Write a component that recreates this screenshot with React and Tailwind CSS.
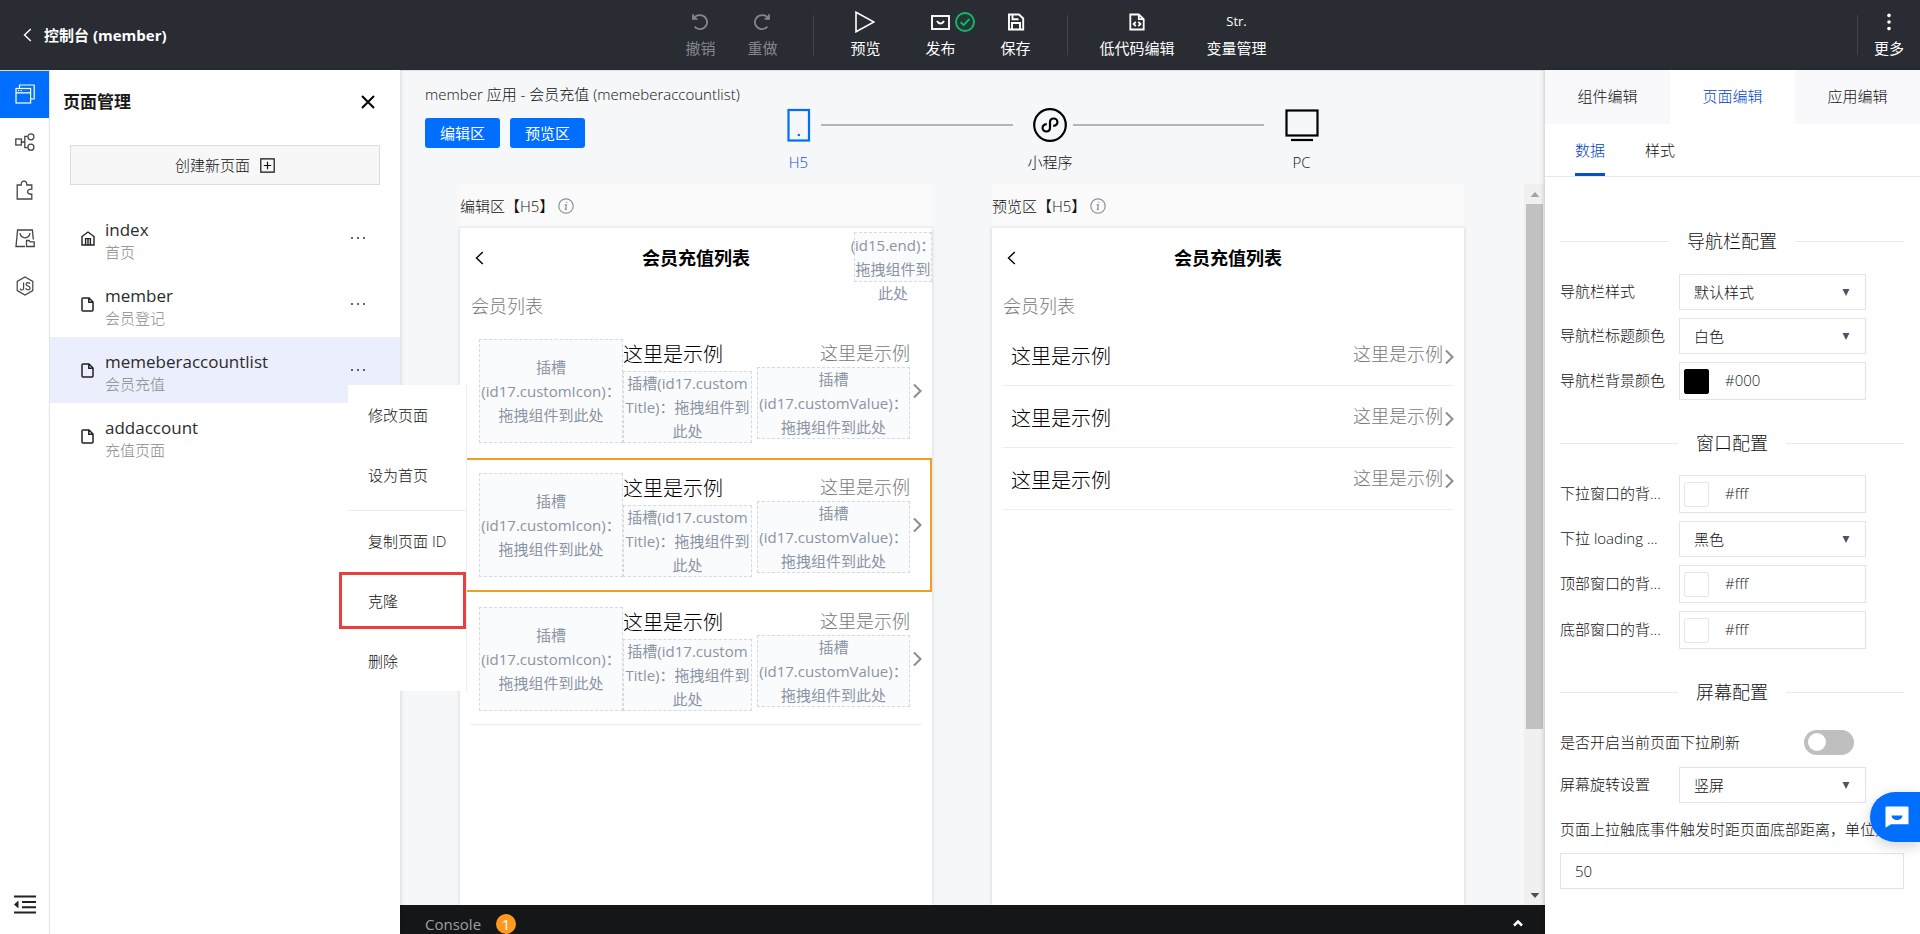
import React, { useState } from 'react';

const stroke = { fill: 'none', stroke: 'currentColor' };

/* ---------- icons ---------- */
const ChevronLeft = ({ className }) => (
  <svg viewBox="0 0 9 14" className={className} {...stroke} strokeWidth="1.4"><path d="M7.8 1 1.5 7l6.3 6" /></svg>
);
const ChevronRight = ({ className }) => (
  <svg viewBox="0 0 9 16" className={className} {...stroke} strokeWidth="2"><path d="M1 1.5 7.5 8 1 14.5" /></svg>
);
const UndoIcon = () => (
  <svg viewBox="0 0 18 18" className="size-[18px]" {...stroke} strokeWidth="1.8">
    <path d="M2 1.200v4.600h4.400M2.600 5.400A7 7 0 0 1 9 2.200a7 7 0 1 1-5.400 11.400" />
  </svg>
);
const RedoIcon = () => (
  <svg viewBox="0 0 18 18" className="size-[18px]" {...stroke} strokeWidth="1.8">
    <path d="M16 1.200v4.600h-4.400M15.400 5.400A7 7 0 0 0 9 2.200a7 7 0 1 0 5.400 11.400" />
  </svg>
);
const PlayIcon = () => (
  <svg viewBox="0 0 20 22" className="h-[22px] w-5" {...stroke} strokeWidth="1.6"><path d="M1 1.200v19.600L19 11z" /></svg>
);
const PublishIcon = () => (
  <svg viewBox="0 0 19 15" className="h-[15px] w-[19px]" {...stroke} strokeWidth="1.9">
    <rect x="1" y="1" width="17" height="13" />
    <path d="M6 6c1 1.800 2 2.500 3.500 2.500S12 7.800 13 6" />
  </svg>
);
const CheckCircle = () => (
  <svg viewBox="0 0 20 20" className="size-5" fill="none" stroke="#16b868" strokeWidth="1.9">
    <circle cx="10" cy="10" r="9" fill="#1f3a35" />
    <path d="m5.600 10.200 3 3L14.400 7" />
  </svg>
);
const SaveIcon = () => (
  <svg viewBox="0 0 18 18" className="size-[18px]" {...stroke} strokeWidth="1.900">
    <path d="M2 1.500h10l4.200 4V16.500H2zM5.500 1.800v4.400h6M5 16.300V10h8v6.300" />
  </svg>
);
const CodeFileIcon = () => (
  <svg viewBox="0 0 16 18" className="h-[18px] w-4" {...stroke} strokeWidth="1.800">
    <path d="M1.300 1.500h8.500l4.900 4.700v10.300H1.300zM9.800 1.500v4.700h5M6.800 8.800 4.600 11l2.200 2.200M9.300 8.800l2.200 2.200-2.200 2.200" />
  </svg>
);
const MoreIcon = () => (
  <svg viewBox="0 0 4 18" className="h-[18px] w-1" fill="currentColor">
    <circle cx="2" cy="2.400" r="1.800" /><circle cx="2" cy="9" r="1.800" /><circle cx="2" cy="15.600" r="1.800" />
  </svg>
);
const PagesIcon = () => (
  <svg viewBox="0 0 20 20" className="size-5" {...stroke} strokeWidth="1.200">
    <path d="M4.500 4V1h14.700v14h-3.500" />
    <rect x="1" y="4.500" width="14.600" height="14.500" />
    <path d="M1 8.800h14.600M3 6.700h1.200M5.600 6.700h1.200" />
  </svg>
);
const FlowIcon = () => (
  <svg viewBox="0 0 20 18" className="h-[18px] w-5" {...stroke} strokeWidth="1.300">
    <rect x=".8" y="6" width="5.600" height="6" />
    <path d="M6.400 9h3.400M12.600 3.400H9.800v11.200h2.800" />
    <circle cx="15.900" cy="3.800" r="3" /><circle cx="15.900" cy="14.200" r="3" />
  </svg>
);
const PuzzleIcon = () => (
  <svg viewBox="0 0 18 20" className="h-5 w-[18px]" {...stroke} strokeWidth="1.300">
    <path d="M1.200 5h4C5 2.400 6.200 1.200 8 1.200S11 2.400 10.800 5h5v4.200c-2.600-.2-4.200.8-4.200 2.500s1.600 2.700 4.200 2.500V19H1.200z" />
  </svg>
);
const BagIcon = () => (
  <svg viewBox="0 0 20 19" className="h-[19px] w-5" {...stroke} strokeWidth="1.300">
    <path d="M10 17.500H1L2.600 1h14.800l.9 9.500M5 4.200c.5 3 2.400 4.600 5 4.600s4.500-1.600 5-4.600" />
    <path d="M11.500 17.500v-6h2.600l1.200 1.400h3.900v4.600z" />
  </svg>
);
const NodeIcon = () => (
  <svg viewBox="0 0 18 20" className="h-5 w-[18px]" {...stroke} strokeWidth="1.200">
    <path d="M9 1l7.800 4.400v9.200L9 19l-7.800-4.400V5.400z" />
    <path d="M7.600 6.500v5.800c0 1.300-.8 1.700-1.600 1.700s-1.700-.5-1.700-1.600M13.900 8c-.2-1-1-1.400-1.900-1.400-1.100 0-1.900.6-1.900 1.600 0 2.300 4 1.400 4 3.800 0 1.100-.9 1.800-2.100 1.800s-2.100-.6-2.200-1.800" />
  </svg>
);
const CollapseIcon = () => (
  <svg viewBox="0 0 22 19" className="h-[19px] w-[22px] text-[#222]" fill="currentColor">
    <path d="M0 .5h22v2H0zM8 6h14v2H8zM8 11.300h14v2H8zM0 16.500h22v2H0zM4.500 5.500v8L0 9.500z" />
  </svg>
);
const HomeIcon = () => (
  <svg viewBox="0 0 14 15" className="h-[15px] w-3.5" {...stroke} strokeWidth="1.400">
    <path d="M1 5.500 7 1l6 4.500V14H1zM4.600 14V7.600h4.800V14M7 8v6" />
  </svg>
);
const FileIcon = () => (
  <svg viewBox="0 0 13 15" className="h-[15px] w-[13px]" {...stroke} strokeWidth="1.500">
    <path d="M2 1h6l4 4v8a1 1 0 0 1-1 1H2a1 1 0 0 1-1-1V2a1 1 0 0 1 1-1zM7.800 1v4.200H12" />
  </svg>
);
const Dots = () => (
  <svg viewBox="0 0 16 4" className="h-1 w-4" fill="currentColor">
    <circle cx="2" cy="2" r="1" /><circle cx="8" cy="2" r="1" /><circle cx="14" cy="2" r="1" />
  </svg>
);
const CloseIcon = () => (
  <svg viewBox="0 0 14 14" className="size-3.5" {...stroke} strokeWidth="2"><path d="m1 1 12 12M13 1 1 13" /></svg>
);
const PlusBox = () => (
  <svg viewBox="0 0 15 15" className="size-[15px]" {...stroke} strokeWidth="1.200">
    <path d="M.8.8h13.400v13.400H.8zM7.500 3.800v7.400M3.800 7.500h7.400" />
  </svg>
);
const InfoIcon = () => (
  <svg viewBox="0 0 16 16" className="size-4 text-[#8a939c]" {...stroke} strokeWidth="1.200">
    <circle cx="8" cy="8" r="7.200" />
    <path d="M6.600 6.800h1.800l-1 4.600h1.500" /><circle cx="8.800" cy="4.400" r=".6" fill="currentColor" stroke="none" />
  </svg>
);
const PhoneIcon = () => (
  <svg viewBox="0 0 24 34" className="h-[34px] w-6" {...stroke} strokeWidth="2.200">
    <rect x="1.500" y="2" width="20.500" height="30.500" /><path d="M10.700 27h2.200" />
  </svg>
);
const MiniIcon = () => (
  <svg viewBox="0 0 34 34" className="size-[34px]" {...stroke} strokeWidth="2.200">
    <circle cx="17" cy="17" r="15.800" />
    <path d="M13.800 16.200c-2.600.2-4.200 1.700-4.200 3.800 0 2 1.600 3.500 3.700 3.500s3.700-1.500 3.700-3.700v-5.600c0-2.200 1.600-3.700 3.700-3.700s3.700 1.500 3.700 3.500c0 2.100-1.600 3.600-4.200 3.800" />
  </svg>
);
const MonitorIcon = () => (
  <svg viewBox="0 0 34 34" className="size-[34px]" {...stroke} strokeWidth="2.200">
    <rect x="1.500" y="2.500" width="31" height="25" /><path d="M6 32h22" />
  </svg>
);
const Caret = ({ className }) => (
  <svg viewBox="0 0 8 7" preserveAspectRatio="none" className={className} fill="currentColor"><path d="M.5 0h7L4 7z" /></svg>
);
const ChatIcon = () => (
  <svg viewBox="0 0 24 22" className="h-[22px] w-6">
    <path d="M.5 1.500a1 1 0 0 1 1-1h21a1 1 0 0 1 1 1v16.700H6L.5 21.700z" fill="#fff" />
    <path d="M6.500 9.500h11a5.500 4.500 0 0 1-11 0z" fill="#006eff" />
  </svg>
);

/* ---------- header ---------- */
function Tool({ icon, label, dim }) {
  return (
    <button className={`flex flex-col items-center gap-0.5 font-normal ${dim ? 'text-[#85878c]' : 'text-white'}`}>
      <span className="flex h-6 items-center">{icon}</span>
      <span className="text-[15px] leading-6 whitespace-nowrap">{label}</span>
    </button>
  );
}
const Divider = () => <span className="h-10 w-px bg-[#414449]" />;

function Header() {
  return (
    <header className="relative z-10 grid h-[70px] shrink-0 grid-cols-[1fr_auto_1fr] items-center bg-[#292c33] shadow-[0_1px_0_#dcdee6]">
      <a href="#console" className="flex items-center gap-3 pl-[23px] text-[15px] font-bold text-white">
        <ChevronLeft className="h-3.5 w-[9px]" />
        控制台 (member)
      </a>
      <nav className="flex items-center gap-9 pl-8">
        <div className="flex gap-8">
          <Tool icon={<UndoIcon />} label="撤销" dim />
          <Tool icon={<RedoIcon />} label="重做" dim />
        </div>
        <Divider />
        <div className="flex gap-[45px]">
          <Tool icon={<PlayIcon />} label="预览" />
          <div className="relative">
            <Tool icon={<PublishIcon />} label="发布" />
            <span className="absolute top-0.5 left-[30px]"><CheckCircle /></span>
          </div>
          <Tool icon={<SaveIcon />} label="保存" />
        </div>
        <div className="flex items-center gap-8">
          <Divider />
          <Tool icon={<CodeFileIcon />} label="低代码编辑" />
          <Tool icon={<span className="text-[13px] font-medium">Str.</span>} label="变量管理" />
        </div>
      </nav>
      <div className="flex items-center justify-end gap-4 pr-4">
        <Divider />
        <Tool icon={<MoreIcon />} label="更多" />
      </div>
    </header>
  );
}

/* ---------- left side ---------- */
const railItems = [
  { label: '页面管理', icon: <PagesIcon />, active: true },
  { label: '流程', icon: <FlowIcon /> },
  { label: '组件', icon: <PuzzleIcon /> },
  { label: '素材', icon: <BagIcon /> },
  { label: '脚本', icon: <NodeIcon /> },
];

function Rail() {
  return (
    <nav className="flex w-[50px] shrink-0 flex-col border-r border-[#ececef] bg-white">
      {railItems.map((it) => (
        <button
          key={it.label}
          aria-label={it.label}
          className={`flex h-12 items-center justify-center ${it.active ? 'bg-[#006eff] text-white' : 'text-[#444]'}`}
        >
          {it.icon}
        </button>
      ))}
      <button aria-label="收起" className="mt-auto mb-5 flex justify-center"><CollapseIcon /></button>
    </nav>
  );
}

const pages = [
  { name: 'index', title: '首页', home: true },
  { name: 'member', title: '会员登记' },
  { name: 'memeberaccountlist', title: '会员充值', active: true },
  { name: 'addaccount', title: '充值页面' },
];

const menuItem = 'block h-[60px] w-full pl-5 text-left text-[15px] text-[#111]';

function PageMenu() {
  return (
    <div className="absolute top-12 left-[298px] z-30 w-[119px] border-r border-[#ededf0] bg-white">
      <button className={menuItem}>修改页面</button>
      <button className={menuItem}>设为首页</button>
      <hr className="mt-[5px] border-[#ececf0]" />
      <button className={menuItem}>复制页面 ID</button>
      <div className="relative">
        <button className={menuItem}>克隆</button>
        <span className="pointer-events-none absolute top-px right-0 h-[57px] w-[127px] border-3 border-[#e84040]" />
      </div>
      <button className={menuItem}>删除</button>
    </div>
  );
}

function PagesPanel() {
  return (
    <aside className="relative z-20 flex w-[350px] shrink-0 flex-col bg-white shadow-[1px_0_4px_rgba(0,0,0,0.12)]">
      <div className="flex h-16 items-center justify-between pr-[25px] pl-[13px]">
        <h2 className="text-[17px] font-bold text-[#1a1a1a]">页面管理</h2>
        <button aria-label="关闭"><CloseIcon /></button>
      </div>
      <button className="mx-5 mt-[11px] flex h-10 items-center justify-center gap-2.5 border border-[#dcdcdf] bg-[#f7f7f8] text-[15px] text-[#111]">
        创建新页面 <PlusBox />
      </button>
      <ul className="mt-5">
        {pages.map((p) => (
          <li
            key={p.name}
            className={`relative flex h-[66px] items-center pr-[34px] pl-[31px] ${p.active ? 'bg-[#ebeefc]' : ''}`}
          >
            <span className="flex w-6 text-[#222]">{p.home ? <HomeIcon /> : <FileIcon />}</span>
            <a href={`#${p.name}`} className="flex-1 pt-1">
              <span className="block text-[17px] leading-6 font-medium text-[#2b2b2b]">{p.name}</span>
              <span className="block text-[15px] leading-5 text-[#888]">{p.title}</span>
            </a>
            {p.name !== 'addaccount' && <button aria-label="更多操作" className="text-[#333]"><Dots /></button>}
            {p.active && <PageMenu />}
          </li>
        ))}
      </ul>
    </aside>
  );
}

/* ---------- canvas ---------- */
function Step({ icon, label, active }) {
  return (
    <button className={`flex w-[45px] flex-col items-center gap-2 ${active ? 'text-[#006eff]' : 'text-black'}`}>
      {icon}
      <span className={`text-[15px] leading-6 whitespace-nowrap ${active ? 'text-[#0052d9]' : 'text-[#111]'}`}>{label}</span>
    </button>
  );
}
const StepLine = () => <span className="mt-4 mr-[15px] h-0.5 flex-1 bg-[#b4b5b9]" />;

function CanvasHead() {
  const btn = 'h-[30px] w-[75px] rounded-[3px] bg-[#006eff] text-[15px] font-normal text-white';
  return (
    <div className="flex h-[114px] shrink-0 pl-[25px]">
      <div className="w-[351px] shrink-0 pt-3">
        <p className="text-[15px] leading-6 whitespace-nowrap text-[#111]">member 应用 - 会员充值 (memeberaccountlist)</p>
        <div className="mt-3 flex gap-2.5">
          <button className={btn}>编辑区</button>
          <button className={btn}>预览区</button>
        </div>
      </div>
      <div className="flex flex-1 items-start pt-[38px] pr-[221px]">
        <Step icon={<PhoneIcon />} label="H5" active />
        <StepLine />
        <Step icon={<MiniIcon />} label="小程序" />
        <StepLine />
        <Step icon={<MonitorIcon />} label="PC" />
      </div>
    </div>
  );
}

function Slot({ lines, className }) {
  return (
    <div className={`flex flex-col items-center border border-dashed border-[#d6dae0] bg-[#fafbfd] text-[15px] leading-6 font-normal whitespace-nowrap text-[#8b94a2] ${className}`}>
      {lines.map((l) => <span key={l}>{l}</span>)}
    </div>
  );
}

function Device({ label, end, children }) {
  return (
    <section className="flex w-[472px] flex-col">
      <h3 className="flex h-11 items-center gap-1 bg-[#fafafa] text-[15px] text-[#111]">
        {label}【H5】<InfoIcon />
      </h3>
      <div className="flex-1 bg-white shadow-[0_0_4px_rgba(0,0,0,0.16)]">
        <div className="relative flex h-[60px] items-center justify-center">
          <button aria-label="返回" className="absolute left-[15px]"><ChevronLeft className="h-3.5 w-[9px]" /></button>
          <h4 className="text-lg font-bold text-black">会员充值列表</h4>
          {end && (
            <div className="absolute top-1 right-0">
              <Slot className="h-[50px] w-[78px]" lines={['(id15.end)：', '拖拽组件到', '此处']} />
            </div>
          )}
        </div>
        <p className="flex h-9 items-center pl-[11px] text-lg text-[#777]">会员列表</p>
        {children}
      </div>
    </section>
  );
}

function EditRow({ selected, last }) {
  return (
    <div className={`h-[134px] border-2 ${selected ? 'border-[#f0a020]' : 'border-transparent'}`}>
      <div className={`mx-2 flex h-[131px] items-center border-b ${last ? 'border-[#ebedf0]' : 'border-transparent'}`}>
        <Slot className="ml-[9px] h-[104px] w-[144px] shrink-0 justify-center" lines={['插槽', '(id17.customIcon)：', '拖拽组件到此处']} />
        <div className="w-[129px] shrink-0">
          <p className="h-8 text-xl leading-8 text-black">这里是示例</p>
          <Slot className="h-[72px] justify-center" lines={['插槽(id17.custom', 'Title)：拖拽组件到', '此处']} />
        </div>
        <div className="mb-1 ml-[5px] w-[153px] shrink-0">
          <p className="h-7 text-right text-lg leading-7 text-[#777]">这里是示例</p>
          <Slot className="h-[72px] justify-center" lines={['插槽', '(id17.customValue)：', '拖拽组件到此处']} />
        </div>
        <ChevronRight className="ml-[3px] h-4 w-[9px] shrink-0 text-[#8c8c8c]" />
      </div>
    </div>
  );
}

function PreviewRow() {
  return (
    <div className="mx-[10px] flex h-[62px] items-center border-b border-[#ebedf0] pt-1 pl-[9px]">
      <p className="flex-1 text-xl text-black">这里是示例</p>
      <p className="mb-1.5 text-lg text-[#777]">这里是示例</p>
      <ChevronRight className="ml-0.5 h-4 w-[9px] text-[#8c8c8c]" />
    </div>
  );
}

function Canvas() {
  return (
    <main className="flex min-w-0 flex-1 flex-col bg-[#f5f7f9]">
      <CanvasHead />
      <div className="flex min-h-0 flex-1">
        <div className="flex min-w-0 flex-1 justify-center gap-[60px]">
          <Device label="编辑区" end>
            <EditRow />
            <EditRow selected />
            <EditRow last />
          </Device>
          <Device label="预览区">
            <PreviewRow />
            <PreviewRow />
            <PreviewRow />
          </Device>
        </div>
        <div className="flex w-[21px] flex-col items-center bg-[#f0f0f0]">
          <span className="flex h-5 items-center text-[#a3a3a3]"><Caret className="h-[5px] w-2.5 rotate-180" /></span>
          <span className="w-[17px] flex-[525] bg-[#c1c1c1]" />
          <span className="flex-[156]" />
          <span className="flex h-5 items-center text-[#505050]"><Caret className="h-[5px] w-2.5" /></span>
        </div>
      </div>
      <footer className="flex h-[29px] shrink-0 items-end overflow-hidden bg-[#141618] pr-[21px] pl-[25px]">
        <button className="flex items-center gap-[15px] text-[15px] leading-5 font-medium text-[#a0a0a0]">
          Console
          <span className="flex size-5 items-center justify-center rounded-full bg-[#ff9a1f] text-white">1</span>
        </button>
        <button aria-label="展开" className="mb-[7px] ml-auto text-white">
          <svg viewBox="0 0 12 8" className="h-2 w-3" {...stroke} strokeWidth="2.500"><path d="m2 6.500 4-4 4 4" /></svg>
        </button>
      </footer>
    </main>
  );
}

/* ---------- settings ---------- */
function SectionTitle({ children }) {
  return (
    <h3 className="flex items-center gap-[18px] text-lg leading-[30px] text-[#111] before:h-px before:flex-1 before:bg-[#e9e9ec] after:h-px after:flex-1 after:bg-[#e9e9ec]">
      {children}
    </h3>
  );
}

function Row({ id, label, children }) {
  return (
    <div className="flex items-center">
      <label htmlFor={id} className="w-[119px] shrink-0 truncate pb-0.5 text-[15px] text-[#111]">{label}</label>
      {children}
    </div>
  );
}

function SelectRow({ id, label, value }) {
  return (
    <Row id={id} label={label}>
      <div className="relative flex w-[187px] items-center">
        <select id={id} className="h-9 w-full appearance-none border border-[#e1e4e8] bg-white pl-3.5 text-[15px] text-[#111]">
          <option>{value}</option>
        </select>
        <Caret className="pointer-events-none absolute right-4 h-[7px] w-2 text-[#4b5563]" />
      </div>
    </Row>
  );
}

function ColorRow({ id, label, value, dark }) {
  return (
    <Row id={id} label={label}>
      <div className="flex h-[38px] w-[187px] items-center gap-4 border border-[#e1e4e8] pl-1">
        <span className={`size-[25px] shrink-0 rounded-[2px] border ${dark ? 'border-black bg-black' : 'border-[#e6e6ea] bg-white'}`} />
        <input id={id} defaultValue={value} className="w-full min-w-0 pb-0.5 text-[15px] text-[#222] outline-none" />
      </div>
    </Row>
  );
}

function Settings() {
  const [refresh, setRefresh] = useState(false);
  const tab = 'flex-1 pb-0.5 text-[15px]';
  return (
    <aside className="relative z-10 flex w-[375px] shrink-0 flex-col overflow-hidden bg-white shadow-[-1px_0_4px_rgba(0,0,0,0.18)]">
      <div className="flex h-[54px] shrink-0">
        <button className={`${tab} bg-[#f8f8fa] text-[#111]`}>组件编辑</button>
        <button className={`${tab} bg-white text-[#0045c4]`}>页面编辑</button>
        <button className={`${tab} bg-[#f8f8fa] text-[#111]`}>应用编辑</button>
      </div>
      <div className="flex h-[53px] shrink-0 gap-10 border-b border-[#e9e9ec] pl-[30px] text-[15px]">
        <button className="border-b-3 border-[#0052c8] pt-1 text-[#0045c4]">数据</button>
        <button className="border-b-3 border-transparent pt-1 text-[#111]">样式</button>
      </div>
      <div className="flex flex-col pt-[49px] pr-4 pl-[15px]">
        <SectionTitle>导航栏配置</SectionTitle>
        <div className="mt-[18px] flex flex-col gap-2">
          <SelectRow id="nav-style" label="导航栏样式" value="默认样式" />
          <SelectRow id="nav-title" label="导航栏标题颜色" value="白色" />
          <ColorRow id="nav-bg" label="导航栏背景颜色" value="#000" dark />
        </div>
        <div className="mt-7"><SectionTitle>窗口配置</SectionTitle></div>
        <div className="mt-[17px] flex flex-col gap-2">
          <ColorRow id="pull-bg" label="下拉窗口的背..." value="#fff" />
          <SelectRow id="pull-loading" label="下拉 loading ..." value="黑色" />
          <ColorRow id="top-bg" label="顶部窗口的背..." value="#fff" />
          <ColorRow id="bottom-bg" label="底部窗口的背..." value="#fff" />
        </div>
        <div className="mt-7"><SectionTitle>屏幕配置</SectionTitle></div>
        <div className="mt-[22px] flex h-[26px] items-center">
          <label htmlFor="refresh" className="text-[15px] text-[#111]">是否开启当前页面下拉刷新</label>
          <input
            id="refresh"
            type="checkbox"
            role="switch"
            checked={refresh}
            onChange={(e) => setRefresh(e.target.checked)}
            className="mr-[50px] ml-auto flex h-[25px] w-[50px] appearance-none items-center rounded-full bg-[#bfbfbf] px-1 before:size-[18px] before:rounded-full before:bg-white checked:justify-end checked:bg-[#006eff]"
          />
        </div>
        <div className="mt-3"><SelectRow id="rotate" label="屏幕旋转设置" value="竖屏" /></div>
        <label htmlFor="reach" className="mt-[14px] text-[15px] leading-6 whitespace-nowrap text-[#111]">
          页面上拉触底事件触发时距页面底部距离，单位为
        </label>
        <input id="reach" defaultValue="50" className="mt-3 h-9 border border-[#e1e4e8] px-3.5 text-[15px] text-[#111]" />
      </div>
      <button aria-label="在线客服" className="absolute right-0 bottom-[92px] flex h-[50px] w-[50px] items-center justify-center rounded-l-full bg-[#006eff] pl-1 shadow-[0_4px_14px_rgba(0,0,0,0.18)]">
        <ChatIcon />
      </button>
    </aside>
  );
}

export default function App() {
  return (
    <div className="flex h-screen flex-col overflow-hidden font-['Open_Sans','Noto_Sans_CJK_SC',sans-serif] font-light">
      <Header />
      <div className="flex min-h-0 flex-1">
        <Rail />
        <PagesPanel />
        <Canvas />
        <Settings />
      </div>
    </div>
  );
}
